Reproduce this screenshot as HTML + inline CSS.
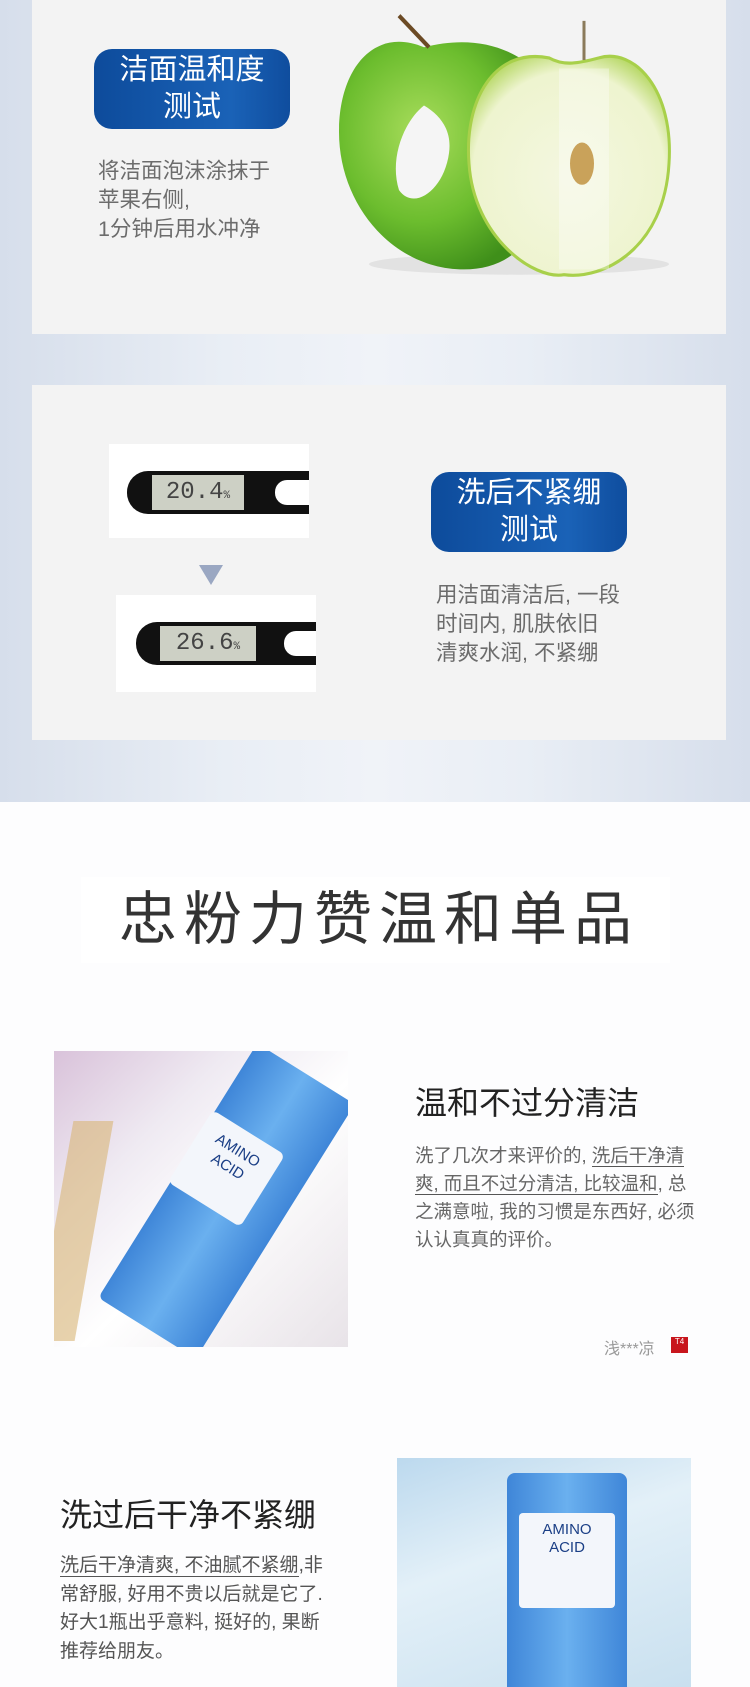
<!DOCTYPE html>
<html><head><meta charset="utf-8"><style>
*{margin:0;padding:0;box-sizing:border-box}
html,body{width:750px;height:1687px;overflow:hidden}
body{background:#fdfdfe;font-family:"Liberation Sans","Noto Sans CJK SC",sans-serif;position:relative}
.abs{position:absolute}
.top{left:0;top:0;width:750px;height:802px;background:linear-gradient(90deg,#d6deeb 0%,#e9eef5 30%,#f0f3f8 50%,#e9eef5 70%,#d6deeb 100%)}
.card{background:#f3f3f3;left:32px;width:694px}
.badge{background:linear-gradient(90deg,#0d4b9b,#1a62b7 70%,#0f4d9e);border-radius:18px;color:#fff;text-align:center;font-size:29px;line-height:37px;padding-top:3px}
.gray{color:#6c6c6c;font-size:21.5px;line-height:29px}
.rv{color:#666;font-size:18.5px;line-height:28px}
.u{border-bottom:1.5px solid #555}
</style></head><body>
<div class="abs top"></div>
<div class="abs card" style="top:0;height:334px"></div>
<div class="abs card" style="top:385px;height:355px"></div>

<div class="abs badge" style="left:94px;top:49px;width:196px;height:80px">洁面温和度<br>测试</div>
<div class="abs gray" style="left:98px;top:157px">将洁面泡沫涂抹于<br>苹果右侧,<br>1分钟后用水冲净</div>

<svg class="abs" style="left:334px;top:5px" width="380" height="275" viewBox="0 0 380 260" preserveAspectRatio="none">
<defs><radialGradient id="g1" cx="40%" cy="40%" r="65%"><stop offset="0" stop-color="#a9dd5c"/><stop offset="0.6" stop-color="#6cbd2e"/><stop offset="1" stop-color="#3f8f1a"/></radialGradient>
<radialGradient id="g2" cx="50%" cy="55%" r="60%"><stop offset="0" stop-color="#f4f7e0"/><stop offset="0.8" stop-color="#eef4cf"/><stop offset="1" stop-color="#b9d96a"/></radialGradient></defs>
<ellipse cx="185" cy="245" rx="150" ry="10" fill="#e2e2e2"/>
<path d="M90 40 C40 20 5 60 5 120 C5 190 60 250 130 250 C170 250 200 230 210 180 L200 60 C170 35 130 30 90 40Z" fill="url(#g1)"/>
<path d="M95 40 L65 10" stroke="#6b4a24" stroke-width="4"/>
<path d="M215 50 C160 40 130 90 135 150 C140 220 200 260 230 255 C270 260 330 230 335 150 C340 80 300 40 265 50 C245 55 230 58 215 50Z" fill="url(#g2)" stroke="#a8d04a" stroke-width="3"/>
<path d="M250 60 L250 250" stroke="#fff" stroke-width="50" opacity=".35"/>
<ellipse cx="248" cy="150" rx="12" ry="20" fill="#c9a25a"/>
<path d="M250 52 L250 15" stroke="#8a7a5a" stroke-width="3"/>
<path d="M90 95 C70 110 55 145 65 175 C80 195 110 175 115 140 C118 120 108 105 90 95Z" fill="#f5f5f5"/>
</svg>

<div class="abs" style="left:109px;top:444px;width:200px;height:94px;background:#fff"></div>
<div class="abs" style="left:127px;top:471px;width:182px;height:43px;background:#111;border-radius:21px 0 0 21px"></div>
<div class="abs" style="left:152px;top:475px;width:92px;height:35px;background:#cdd0c5;font-size:24px;color:#444;text-align:center;line-height:35px;font-family:'Liberation Mono',monospace">20.4<small style="font-size:11px">%</small></div>
<div class="abs" style="left:275px;top:480px;width:34px;height:25px;background:#fff;border-radius:12px 0 0 12px"></div>
<div class="abs" style="left:199px;top:565px;width:0;height:0;border-left:12px solid transparent;border-right:12px solid transparent;border-top:20px solid #9aa7c2"></div>
<div class="abs" style="left:116px;top:595px;width:200px;height:97px;background:#fff"></div>
<div class="abs" style="left:136px;top:622px;width:180px;height:43px;background:#111;border-radius:21px 0 0 21px"></div>
<div class="abs" style="left:160px;top:626px;width:96px;height:35px;background:#cdd0c5;font-size:24px;color:#444;text-align:center;line-height:35px;font-family:'Liberation Mono',monospace">26.6<small style="font-size:11px">%</small></div>
<div class="abs" style="left:284px;top:631px;width:32px;height:25px;background:#fff;border-radius:12px 0 0 12px"></div>

<div class="abs badge" style="left:431px;top:472px;width:196px;height:80px">洗后不紧绷<br>测试</div>
<div class="abs gray" style="left:436px;top:581px">用洁面清洁后, 一段<br>时间内, 肌肤依旧<br>清爽水润, 不紧绷</div>

<div class="abs" style="left:81px;top:877px;width:589px;height:86px;background:#fff;text-align:center;font-size:58px;line-height:86px;color:#333;letter-spacing:7px;padding-left:7px">忠粉力赞温和单品</div>

<div class="abs" style="left:54px;top:1051px;width:294px;height:296px;background:linear-gradient(135deg,#d9c2da 0%,#efeaf2 30%,#fff 55%,#e8e3e8 100%);overflow:hidden">
<div class="abs" style="left:0;top:70px;width:40px;height:220px;background:#d8b677;opacity:.6;transform:skewX(-10deg)"></div>
<div class="abs" style="left:115px;top:0;width:115px;height:300px;background:linear-gradient(90deg,#3f86d8,#6ab0ef 50%,#3f86d8);transform:rotate(32deg);border-radius:6px"></div>
<div class="abs" style="left:130px;top:75px;width:85px;height:85px;background:#f3f6fb;transform:rotate(32deg);border-radius:6px;font-size:15px;color:#1b3f86;text-align:center;line-height:19px;padding-top:12px">AMINO<br>ACID</div>
</div>
<div class="abs" style="left:415px;top:1083px;font-size:32px;line-height:40px;color:#222">温和不过分清洁</div>
<div class="abs rv" style="left:415px;top:1142px;width:300px">洗了几次才来评价的, <span class="u">洗后干净清<br>爽, 而且不过分清洁, 比较温和</span>, 总<br>之满意啦, 我的习惯是东西好, 必须<br>认认真真的评价。</div>
<div class="abs" style="left:604px;top:1335px;font-size:16px;color:#999">浅***凉</div>
<div class="abs" style="left:671px;top:1337px;width:17px;height:16px;background:#c8161d;color:#fff;font-size:8px;text-align:center;line-height:10px">T4</div>

<div class="abs" style="left:60px;top:1495px;font-size:32px;line-height:40px;color:#222">洗过后干净不紧绷</div>
<div class="abs rv" style="left:60px;top:1552px;width:300px;font-size:19px;line-height:28.7px;color:#555"><span class="u">洗后干净清爽, 不油腻不紧绷</span>,非<br>常舒服, 好用不贵以后就是它了.<br>好大1瓶出乎意料, 挺好的, 果断<br>推荐给朋友。</div>

<div class="abs" style="left:397px;top:1458px;width:294px;height:229px;background:linear-gradient(160deg,#bcd9ee 0%,#e3f0f8 40%,#c9e0ef 100%);overflow:hidden">
<div class="abs" style="left:110px;top:15px;width:120px;height:214px;background:linear-gradient(90deg,#3f86d8,#6ab0ef 50%,#3f86d8);border-radius:8px 8px 0 0"></div>
<div class="abs" style="left:122px;top:55px;width:96px;height:95px;background:#f3f6fb;border-radius:4px;font-size:15px;color:#1b3f86;text-align:center;line-height:18px;padding-top:8px">AMINO<br>ACID</div>
</div>
</body></html>
